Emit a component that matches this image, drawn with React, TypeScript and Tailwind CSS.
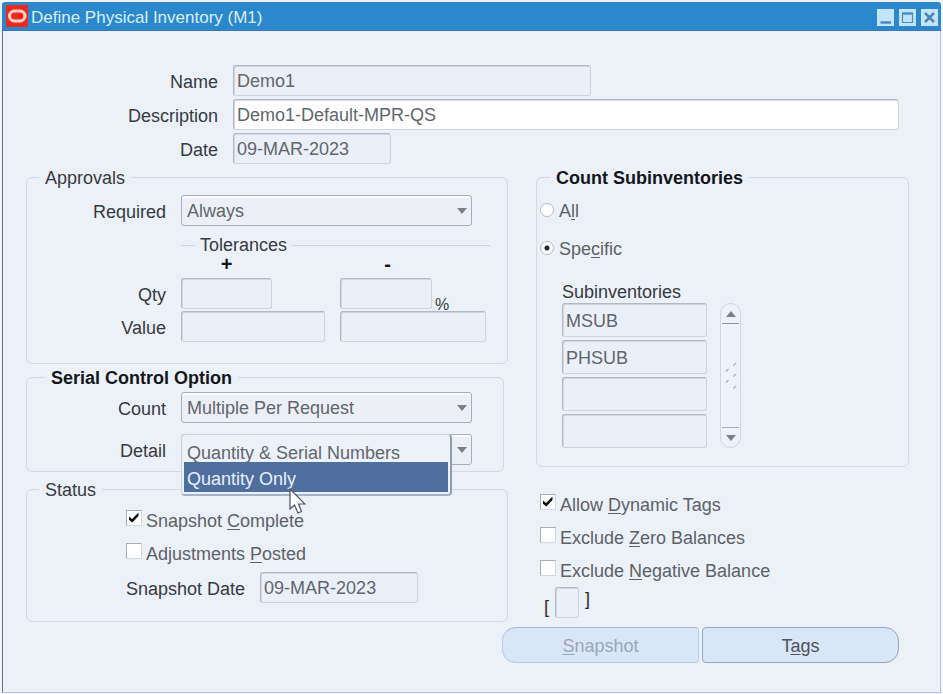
import { useState } from "react";
import type { ReactNode } from "react";
import clsx from "clsx";

const fieldStyle =
  "rounded-[3px] border border-[#cdd3e0] border-t-[#b3b8c4] border-l-[#b3b8c4] bg-[#ebf0f8] px-[3px] pt-[2px] text-lg text-[#62666e] shadow-[inset_1px_1px_0_#d3d7e1] outline-none";

interface TextFieldProps {
  id?: string;
  label?: string;
  value?: string;
  className?: string;
}

function TextField({ id, label, value = "", className }: TextFieldProps) {
  return (
    <input
      id={id}
      type="text"
      aria-label={label}
      defaultValue={value}
      className={clsx("min-w-0", fieldStyle, className)}
    />
  );
}

function Row({ id, label, children }: { id: string; label: string; children: ReactNode }) {
  return (
    <div className="flex items-center gap-[15px]">
      <label htmlFor={id} className="w-[192px] shrink-0 pt-[3px] text-right">
        {label}
      </label>
      {children}
    </div>
  );
}

interface GroupProps {
  title: string;
  bold?: boolean;
  className?: string;
  children: ReactNode;
}

function Group({ title, bold = false, className, children }: GroupProps) {
  return (
    <fieldset className={clsx("min-w-0 rounded-md border border-[#d3d9e6]", className)}>
      <legend
        className={clsx(
          "ml-[12px] h-6 px-[6px] leading-[26px]",
          bold && "font-bold text-[#14161c]"
        )}
      >
        {title}
      </legend>
      {children}
    </fieldset>
  );
}

function Select({ id, options }: { id: string; options: string[] }) {
  return (
    <div className="relative w-[291px] shrink-0">
      <select
        id={id}
        className="h-[31px] w-full appearance-none rounded-[3px] border border-[#a9aeb8] bg-[#ecf0f6] pl-[5px] text-lg leading-6 text-[#62666e] shadow-[inset_0_2px_0_#f8fafd] outline-none"
      >
        {options.map((option) => (
          <option key={option}>{option}</option>
        ))}
      </select>
      <svg
        viewBox="0 0 10 6"
        className="pointer-events-none absolute top-[13px] right-[5px] h-[6px] w-[10px] fill-[#7b7f87]"
      >
        <path d="M0 0H10L5 6Z" />
      </svg>
    </div>
  );
}

interface CheckProps {
  before: string;
  hotkey: string;
  after: string;
  checked?: boolean;
}

function Check({ before, hotkey, after, checked = false }: CheckProps) {
  const [on, setOn] = useState(checked);

  return (
    <label className="flex h-[33px] items-center gap-[4px] text-[#5d6169]">
      <span className="relative mb-[5px] flex h-[16px] w-[16px] shrink-0">
        <input
          type="checkbox"
          checked={on}
          onChange={(e) => setOn(e.target.checked)}
          className="h-full w-full appearance-none border border-[#d3d7e2] border-t-[#a9adb8] border-l-[#a9adb8] bg-white"
        />
        {on && (
          <svg viewBox="0 0 16 16" className="pointer-events-none absolute inset-0 fill-[#0c0d10]">
            <path d="M3 6.5 6 9 12.5 2.5V6L6.3 12.5 3 9.8Z" />
          </svg>
        )}
      </span>
      <span className="whitespace-nowrap">
        {before}
        <Hotkey>{hotkey}</Hotkey>
        {after}
      </span>
    </label>
  );
}

function Hotkey({ children }: { children: ReactNode }) {
  return <span className="underline decoration-1 underline-offset-2">{children}</span>;
}

function TitleBar() {
  return (
    <header className="flex h-[29px] items-center rounded-t-[3px] border-b border-[#3d78b2] bg-[#2b88cd] pr-[3px] pl-[4px]">
      <svg viewBox="0 0 22 22" className="h-[22px] w-[22px] shrink-0">
        <rect width="22" height="22" fill="#ee2a20" />
        <rect x="3.5" y="6" width="15.5" height="10" rx="5" fill="none" stroke="#ffd2c8" strokeWidth="3" />
      </svg>
      <h1 className="ml-[3px] flex-1 pt-1 text-[17px] leading-6 text-[#d9effc]">
        Define Physical Inventory (M1)
      </h1>
      <div className="flex gap-[5px] pt-[2px]">
        <button type="button" aria-label="Minimize" className="h-[17px] w-[17px] bg-[#c3e5fa]">
          <svg viewBox="0 0 17 17">
            <path d="M3.5 13.5H14" stroke="#4b86b8" strokeWidth="2.4" />
          </svg>
        </button>
        <button type="button" aria-label="Maximize" className="h-[17px] w-[17px] bg-[#c3e5fa]">
          <svg viewBox="0 0 17 17" fill="none" stroke="#4b8cc0">
            <path d="M3.5 4V13.5H13.5V4" strokeWidth="1.2" />
            <path d="M3 4.5H14" strokeWidth="2.4" />
          </svg>
        </button>
        <button type="button" aria-label="Close" className="h-[17px] w-[17px] bg-[#c3e5fa]">
          <svg viewBox="0 0 17 17">
            <path d="M4 4 13 13M13 4 4 13" stroke="#4b86b8" strokeWidth="2.6" />
          </svg>
        </button>
      </div>
    </header>
  );
}

function Approvals() {
  return (
    <Group title="Approvals" className="mt-[1px] pb-[21px]">
      <div className="flex items-center gap-[15px] pt-[6px]">
        <label htmlFor="required" className="w-[139px] shrink-0 pt-[3px] text-right">
          Required
        </label>
        <Select id="required" options={["Always", "If out of tolerance", "Never"]} />
      </div>

      <div className="mt-[8px] mr-[17px] ml-[154px] flex h-[22px] items-center gap-[5px]">
        <span className="h-px w-[14px] bg-[#cdd4e2]" />
        <span className="leading-[22px]">Tolerances</span>
        <span className="h-px flex-1 bg-[#cdd4e2]" />
      </div>

      <div className="ml-[154px] grid grid-cols-[91px_91px] gap-x-[70px] text-center text-xl leading-[16px] font-bold text-[#14161c]">
        <span>+</span>
        <span>-</span>
      </div>

      <div className="mt-[6px] grid grid-cols-[139px_144px_146px] items-center gap-x-[15px] gap-y-[2px]">
        <label htmlFor="qty-plus" className="pt-[3px] text-right">
          Qty
        </label>
        <TextField id="qty-plus" className="h-[31px] w-[91px]" />
        <div className="flex items-end gap-[3px]">
          <TextField label="Qty minus" className="h-[31px] w-[92px]" />
          <span className="h-3 text-base leading-4">%</span>
        </div>
        <label htmlFor="value-plus" className="pt-[3px] text-right">
          Value
        </label>
        <TextField id="value-plus" className="h-[31px]" />
        <TextField label="Value minus" className="h-[31px]" />
      </div>
    </Group>
  );
}

function SerialControl() {
  const [detail, setDetail] = useState("Quantity Only");
  const options = ["Quantity & Serial Numbers", "Quantity Only"];

  return (
    <Group title="Serial Control Option" bold className="mt-[1px] mr-1 pb-[6px] [&>legend]:ml-[18px]">
      <div className="flex items-center gap-[15px] pt-[3px]">
        <label htmlFor="count" className="w-[139px] shrink-0 pt-[3px] text-right">
          Count
        </label>
        <Select id="count" options={["Multiple Per Request"]} />
      </div>
      <div className="mt-[11px] flex items-center gap-[15px]">
        <label htmlFor="detail" className="w-[139px] shrink-0 pt-[3px] text-right">
          Detail
        </label>
        <div className="relative">
          <Select id="detail" options={options} />
          <ul
            role="listbox"
            aria-label="Detail"
            className="absolute top-0 left-0 z-10 w-[271px] rounded-[4px] border border-[#cbd2e2] border-r-2 border-r-[#8f9db8] border-b-2 border-b-[#a3b3d0] bg-[#edf1f8] p-[2px] pt-[4px]"
          >
            {options.map((option) => (
              <li key={option} role="option" aria-selected={option === detail}>
                <button
                  type="button"
                  onClick={() => setDetail(option)}
                  className={clsx(
                    "block w-full px-[3px] text-left whitespace-nowrap",
                    option === detail
                      ? "h-[30px] bg-[#4f709f] leading-[34px] text-[#e6effa]"
                      : "h-[23px] leading-[28px] text-[#62666e]"
                  )}
                >
                  {option}
                </button>
              </li>
            ))}
          </ul>
          <svg
            viewBox="0 0 17 26"
            className="pointer-events-none absolute top-[54px] left-[108px] z-20 h-[26px] w-[17px]"
          >
            <path
              d="M1 1V21L5.5 17 9 25 12.5 23.5 9.5 16H16Z"
              fill="#fff"
              stroke="#4e525c"
              strokeWidth="1.2"
            />
          </svg>
        </div>
      </div>
    </Group>
  );
}

function Status() {
  return (
    <Group title="Status" className="mt-[5px] pb-[18px]">
      <div className="ml-[99px] pt-[3px]">
        <Check before="Snapshot " hotkey="C" after="omplete" checked />
        <Check before="Adjustments " hotkey="P" after="osted" />
        <div className="mt-[2px] flex items-center gap-[15px]">
          <label htmlFor="snapshot-date" className="pt-[3px]">
            Snapshot Date
          </label>
          <TextField id="snapshot-date" value="09-MAR-2023" className="h-[31px] w-[158px]" />
        </div>
      </div>
    </Group>
  );
}

function Radio({ value, checked, children }: { value: string; checked?: boolean; children: ReactNode }) {
  return (
    <label className="flex h-[38px] items-center gap-[5px] text-[#5d6169]">
      <input
        type="radio"
        name="scope"
        value={value}
        defaultChecked={checked}
        className="mb-[3px] h-[14px] w-[14px] appearance-none rounded-full border border-[#b6bac4] bg-white checked:bg-[radial-gradient(circle,#22242a_2px,#fff_3px)]"
      />
      <span>{children}</span>
    </label>
  );
}

function ScrollBar() {
  return (
    <div className="flex w-[21px] flex-col items-center justify-between rounded-full border border-[#cfd5e2] bg-[#eef2f9]">
      <button
        type="button"
        aria-label="Scroll up"
        className="flex h-[20px] w-[17px] items-center justify-center border-b border-[#8f939c]"
      >
        <svg viewBox="0 0 10 6" className="h-[6px] w-[10px] fill-[#7b7f87]">
          <path d="M0 6H10L5 0Z" />
        </svg>
      </button>
      <svg
        viewBox="0 0 14 28"
        className="h-[28px] w-[14px] stroke-[#a9adb8]"
        fill="none"
        strokeWidth="1.2"
      >
        <path d="M9.5 3.5 12 1M2 9.5 4.5 7M9.5 14.5 12 12M2 20.5 4.5 18M9.5 26.5 12 24" />
      </svg>
      <button
        type="button"
        aria-label="Scroll down"
        className="flex h-[20px] w-[17px] items-center justify-center border-t border-[#a9adb5]"
      >
        <svg viewBox="0 0 10 6" className="h-[6px] w-[10px] fill-[#7b7f87]">
          <path d="M0 0H10L5 6Z" />
        </svg>
      </button>
    </div>
  );
}

function Subinventories() {
  const rows = ["MSUB", "PHSUB", "", ""];

  return (
    <Group title="Count Subinventories" bold className="mt-[1px] pb-[18px] [&>legend]:ml-[13px]">
      <div className="pt-[3px] pl-[3px]">
        <Radio value="all">
          A<Hotkey>l</Hotkey>l
        </Radio>
        <Radio value="specific" checked>
          Spe<Hotkey>c</Hotkey>ific
        </Radio>
      </div>
      <div className="pt-[13px] pl-[25px]">
        <p className="leading-[22px]">Subinventories</p>
        <div className="flex gap-[13px]">
          <div className="flex flex-col gap-[3px]">
            {rows.map((row, i) => (
              <TextField
                key={i}
                label={`Subinventory ${i + 1}`}
                value={row}
                className="h-[34px] w-[145px]"
              />
            ))}
          </div>
          <ScrollBar />
        </div>
      </div>
    </Group>
  );
}

export default function App() {
  return (
    <div className="min-h-screen bg-[#f1f4fb] px-[2px] pt-[2px] font-['Liberation_Sans',Arial,sans-serif] text-lg leading-6 text-[#363a42]">
      <TitleBar />
      <main className="border border-t-0 border-[#b9c5dc] border-l-[#5f7696] bg-[#ecf1f7] pt-[34px] pr-[31px] pb-[29px] pl-[23px]">
        <div className="flex flex-col gap-[3px] pr-[10px]">
          <Row id="name" label="Name">
            <TextField id="name" value="Demo1" className="h-[31px] w-[358px]" />
          </Row>
          <Row id="description" label="Description">
            <TextField
              id="description"
              value="Demo1-Default-MPR-QS"
              className="h-[31px] flex-1 bg-white"
            />
          </Row>
          <Row id="date" label="Date">
            <TextField id="date" value="09-MAR-2023" className="h-[31px] w-[158px]" />
          </Row>
        </div>

        <div className="grid grid-cols-[482fr_373fr] gap-x-[28px]">
          <div>
            <Approvals />
            <SerialControl />
            <Status />
          </div>
          <div>
            <Subinventories />
            <div className="mt-[21px] pl-[4px]">
              <Check before="Allow " hotkey="D" after="ynamic Tags" checked />
              <Check before="Exclude " hotkey="Z" after="ero Balances" />
              <Check before="Exclude " hotkey="N" after="egative Balance" />
              <div className="flex h-[32px] gap-[6px] pl-[4px] text-[#2a2d34]">
                <span className="self-end">[</span>
                <TextField label="Flexfield" className="h-[31px] w-[24px]" />
                <span>]</span>
              </div>
            </div>
            <div className="mt-[8px] mr-[10px] -ml-[34px] flex gap-[3px]">
              <button
                type="button"
                disabled
                className="h-[36px] flex-1 rounded-l-[14px] rounded-r-[4px] border border-[#b9cbe4] border-t-[#a9b8cf] bg-[#d9e6f6] pt-[2px] text-[#9ba6b6]"
              >
                <Hotkey>S</Hotkey>napshot
              </button>
              <button
                type="button"
                className="h-[36px] flex-1 rounded-l-[4px] rounded-r-[14px] border border-[#95a6c2] bg-[#d9e6f6] pt-[2px] text-[#4e535c]"
              >
                T<Hotkey>a</Hotkey>gs
              </button>
            </div>
          </div>
        </div>
      </main>
    </div>
  );
}
